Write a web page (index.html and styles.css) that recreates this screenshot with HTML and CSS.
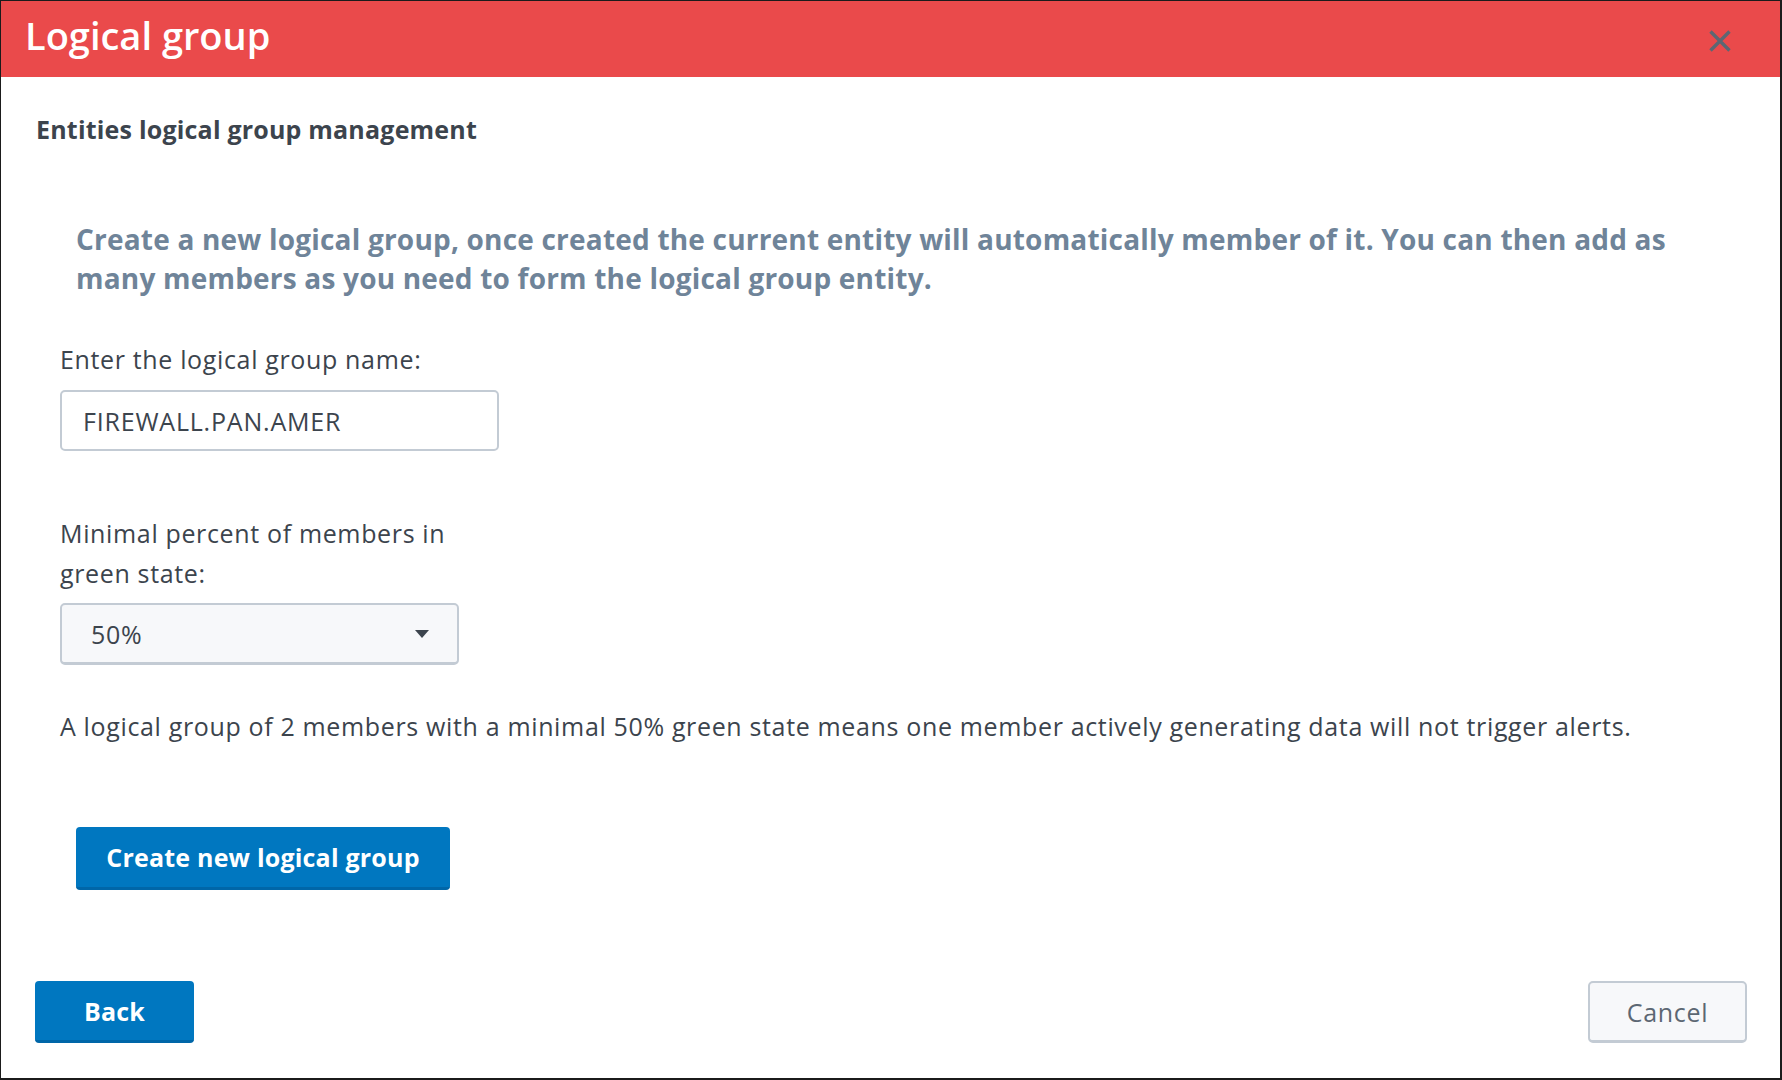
FILE: index.html
```html
<!DOCTYPE html>
<html lang="en">
<head>
<meta charset="utf-8">
<title>Logical group</title>
<link rel="stylesheet" href="styles.css">
</head>
<body>
<div class="modal">
  <header class="modal-header">
    <h1 class="modal-title">Logical group</h1>
    <button class="close-btn" aria-label="Close">
      <svg width="22" height="22" viewBox="0 0 22 22"><path d="M1.5 1.5 L20.5 20.5 M20.5 1.5 L1.5 20.5" stroke="#5c6773" stroke-width="3.4" stroke-linecap="butt" fill="none"/></svg>
    </button>
  </header>
  <main class="modal-body">
    <h2 class="section-title">Entities logical group management</h2>
    <p class="intro">Create a new logical group, once created the current entity will automatically member of it. You can then add as many members as you need to form the logical group entity.</p>
    <div class="form">
      <label class="field-label" for="grp">Enter the logical group name:</label>
      <input id="grp" class="text-input" type="text" value="FIREWALL.PAN.AMER">
      <label class="field-label narrow">Minimal percent of members in green state:</label>
      <div class="select">
        <span class="select-value">50%</span>
        <svg class="caret" width="14" height="8" viewBox="0 0 14 8"><path d="M0 0 H14 L7 8 Z" fill="#3c444d"/></svg>
      </div>
      <p class="help">A logical group of 2 members with a minimal 50% green state means one member actively generating data will not trigger alerts.</p>
    </div>
    <button class="btn btn-primary btn-create">Create new logical group</button>
  </main>
  <footer class="modal-footer">
    <button class="btn btn-primary btn-back">Back</button>
    <button class="btn btn-secondary">Cancel</button>
  </footer>
</div>
</body>
</html>
```
FILE: styles.css
```css
* { box-sizing: border-box; }
html, body { margin: 0; padding: 0; background: #fff; }
body { font-family: "Open Sans", "Noto Sans", "Liberation Sans", sans-serif; color: #3c444d; }

.modal {
  width: 1782px;
  height: 1080px;
  border: 1px solid #1b1b1b;
  border-right-width: 2px;
  border-bottom-width: 2px;
  display: flex;
  flex-direction: column;
  background: #fff;
}

.modal-header {
  height: 76px;
  background: #ea4a4b;
  display: flex;
  align-items: center;
  justify-content: space-between;
  padding: 0 49px 0 24px;
  flex: none;
}
.modal-title {
  margin: 0 0 8px;
  color: #fff;
  font-size: 38px;
  font-weight: 600;
  line-height: 1;
  letter-spacing: 0;
}
.close-btn {
  background: none;
  border: 0;
  padding: 0;
  margin-top: 4px;
  width: 22px;
  height: 22px;
  display: block;
}
.close-btn svg { display: block; }

.modal-body {
  padding: 0 35px;
  display: flex;
  flex-direction: column;
  align-items: flex-start;
  flex: 1;
}
.section-title {
  margin: 37px 0 0;
  font-size: 25px;
  line-height: 30px;
  font-weight: 700;
  color: #3c444d;
  letter-spacing: 0.2px;
}
.intro {
  margin: 76px 0 0 40px;
  font-size: 28px;
  line-height: 39px;
  font-weight: 700;
  color: #6f8499;
  max-width: 1620px;
  letter-spacing: 0.2px;
}
.form {
  margin-left: 24px;
  display: flex;
  flex-direction: column;
  align-items: flex-start;
}
.field-label {
  margin-top: 41px;
  font-size: 25px;
  line-height: 40px;
  color: #3c444d;
  letter-spacing: 0.65px;
}
.field-label.narrow { margin-top: 62px; max-width: 420px; }
.text-input {
  margin-top: 11px;
  width: 439px;
  height: 61px;
  border: 2px solid #c3cbd4;
  border-radius: 5px;
  padding: 0 21px;
  font-family: inherit;
  font-size: 25px;
  letter-spacing: 0.8px;
  color: #3c444d;
  background: #fff;
  outline: none;
}
.select {
  margin-top: 10px;
  width: 399px;
  height: 62px;
  border: 2px solid #c3cbd4;
  border-bottom-width: 3px;
  border-radius: 5px;
  background: #f7f8fa;
  display: flex;
  align-items: center;
  justify-content: space-between;
  padding: 0 28px 0 29px;
}
.select-value { font-size: 25px; letter-spacing: 0.65px; color: #3c444d; }
.caret { display: block; }
.help {
  margin: 41px 0 0;
  font-size: 25px;
  line-height: 40px;
  color: #3c444d;
  letter-spacing: 0.65px;
}

.btn {
  font-family: inherit;
  font-size: 25px;
  border-radius: 4px;
  cursor: pointer;
  height: 62px;
}
.btn-primary {
  background: #0077c0;
  color: #fff;
  font-weight: 700;
  border: 0;
  border-bottom: 3px solid #0066a8;
  letter-spacing: 0.2px;
}
.btn-create {
  margin: 81px 0 0 40px;
  width: 374px;
  height: 63px;
}
.btn-back { width: 159px; }
.btn-secondary {
  width: 159px;
  background: #f7f8fa;
  color: #5c6773;
  border: 2px solid #c3cbd4;
  border-bottom-width: 3px;
  border-radius: 5px;
  letter-spacing: 0.7px;
}

.modal-footer {
  display: flex;
  justify-content: space-between;
  padding: 0 33px 35px 34px;
  flex: none;
}
```
